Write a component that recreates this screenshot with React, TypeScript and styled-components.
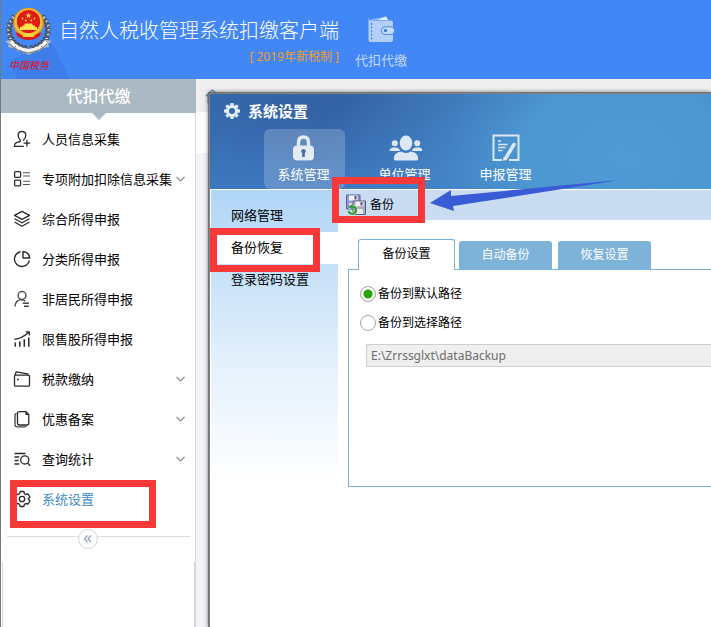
import React, { useState } from "react";
import styled, { createGlobalStyle, css } from "styled-components";

const GlobalStyle = createGlobalStyle`
  *, *::before, *::after { box-sizing: border-box; }
  body {
    margin: 0;
    background: #fff;
    color: #000;
    font-family: "Noto Sans", "Noto Sans CJK SC", sans-serif;
    font-size: 13px;
    line-height: 20px;
  }
  button, input { font: inherit; color: inherit; }
  button { padding: 0; border: 0; background: none; cursor: pointer; }
  svg { display: block; flex: none; }
  ul { list-style: none; margin: 0; padding: 0; }
`;

const Page = styled.div`
  display: flex;
  flex-direction: column;
  min-height: 100vh;
  overflow: hidden;
  border-left: 1px solid #77797d;
`;

/* ---------- application header ---------- */

const Header = styled.header`
  display: flex;
  height: 79px;
  overflow: hidden;
  background: #4287f6;
`;

const Brand = styled.div`
  display: flex;
  flex-direction: column;
  align-items: flex-end;
  padding-top: 16px;
`;

const BrandTitle = styled.h1`
  margin: 0;
  color: #fff;
  font-size: 20px;
  font-weight: 300;
  line-height: 30px;
  white-space: nowrap;
`;

const BrandNote = styled.span`
  color: #f09b26;
  font-size: 12px;
  line-height: 22px;
`;

const HeaderLink = styled.a`
  display: flex;
  flex-direction: column;
  align-items: center;
  gap: 7px;
  margin-left: 16px;
  padding-top: 15px;
  color: #c3dafc;
  text-decoration: none;
  white-space: nowrap;
`;

/* ---------- sidebar ---------- */

const Body = styled.div`
  display: flex;
  flex: 1;
`;

const Sidebar = styled.nav`
  display: flex;
  flex-direction: column;
  flex: none;
  width: 195px;
  background: #fff;
  border-right: 1px solid #d8d9dc;
`;

const SidebarTitle = styled.h2`
  position: relative;
  margin: 0 -1px 6px 0;
  background: #abb9c4;
  color: #fff;
  font-size: 16px;
  font-weight: 500;
  line-height: 34px;
  text-align: center;

  &::after {
    content: "";
    position: absolute;
    top: 100%;
    left: 50%;
    margin-left: -7px;
    border: 7px solid transparent;
    border-top-color: #abb9c4;
    border-bottom: 0;
  }
`;

const MenuEntry = styled.li`
  position: relative;
`;

const MenuButton = styled.button<{ $active?: boolean }>`
  display: flex;
  align-items: center;
  width: 100%;
  height: 40px;
  padding: 0 10px 0 12px;
  color: ${(p) => (p.$active ? "#3c8dc5" : "#000")};
  white-space: nowrap;

  > span {
    flex: 1;
    margin-left: 11px;
    text-align: left;
  }
`;

const CollapseBar = styled.div`
  display: flex;
  margin: 10px 5px 13px 6px;
`;

const CollapseLine = styled.span<{ $short?: boolean }>`
  flex: ${(p) => (p.$short ? "0 0 71px" : "1")};
  height: 8px;
  border-bottom: 1px solid #dcdcdc;
`;

const CollapseButton = styled.button`
  display: grid;
  place-items: center;
  width: 20px;
  height: 20px;
  border: 1px solid #d4d5d8;
  border-radius: 50%;
`;

const SidebarPane = styled.div`
  flex: 1;
  margin-left: 1px;
  margin-right: -1px;
  border: solid #d6d6d6;
  border-width: 0 2px 0 1px;
`;

/* ---------- workspace behind the dialog ---------- */

const Workspace = styled.main`
  display: grid;
  flex: 1;
  min-width: 0;
  background: #f3f4fa;
`;

const Backdrop = styled.div`
  grid-area: 1 / 1;
`;

const Breadcrumb = styled.div`
  display: flex;
  gap: 8px;
  height: 33px;
  padding: 10px 0 0 9px;
  background: #efefef;
  color: #1f7aa6;
  line-height: 20px;
`;

const BlankStrip = styled.div`
  height: 41px;
  background: #fff;
`;

/* ---------- dialog ---------- */

const Dialog = styled.section`
  grid-area: 1 / 1;
  display: flex;
  flex-direction: column;
  z-index: 1;
  min-width: 0;
  margin: 13px 0 0 12px;
  border: solid rgba(100, 102, 104, 0.8);
  border-width: 2px 0 0 2px;
  background: #fff padding-box;
  box-shadow: 0 0 4px rgba(0, 0, 0, 0.5);
`;

const DialogHeader = styled.header`
  height: 95px;
  padding: 7px 0 0 14px;
  color: #fff;
  background:
    radial-gradient(ellipse 300px 230px at 415px 65px, #4f9bd6 0, #4c96d2 35%, rgba(72, 140, 204, 0.6) 60%, rgba(60, 112, 182, 0) 100%),
    radial-gradient(ellipse 260px 80px at 150px 0, #3260a3, rgba(53, 99, 168, 0) 100%),
    linear-gradient(#376bb0, #3d77bd);
`;

const DialogTitle = styled.h2`
  display: flex;
  align-items: center;
  gap: 8px;
  margin: 0 0 8px;
  font-size: 15px;
  font-weight: 700;
  line-height: 20px;
`;

const ModuleTabs = styled.div`
  display: flex;
  gap: 20px;
  padding-left: 40px;
`;

const ModuleTab = styled.button<{ $active?: boolean }>`
  display: flex;
  flex-direction: column;
  align-items: center;
  gap: 2px;
  width: 81px;
  height: 60px;
  padding: 5px 2px 0 0;
  border-radius: 6px;
  color: #fff;
  background: ${(p) => (p.$active ? "rgba(255, 255, 255, 0.2)" : "none")};
`;

const DialogBody = styled.div`
  display: flex;
  flex: 1;
  padding: 1px 0 0 1px;
`;

const SideTabs = styled.ul`
  && {
    flex: none;
    align-self: flex-start;
    width: 127px;
    min-height: 294px;
    padding-top: 10px;
    background: linear-gradient(#b0d6f6, #c7e1f8 28%, #e6f2fc 62%, #fff);
  }
`;

const SideTabEntry = styled.li`
  position: relative;
`;

const SideTab = styled.button<{ $active?: boolean }>`
  display: block;
  width: 100%;
  height: 32px;
  padding: 0 0 2px 20px;
  text-align: left;
  background: ${(p) => (p.$active ? "#fff" : "none")};
`;

const DialogMain = styled.div`
  flex: 1;
  min-width: 0;
`;

const Toolbar = styled.div`
  position: relative;
  height: 30px;
  padding-left: 8px;
  background: #c9dcf2;
`;

const ToolButton = styled.button`
  position: relative;
  display: flex;
  align-items: center;
  gap: 3px;
  height: 30px;
  font-size: 12px;
`;

const TabList = styled.div`
  display: flex;
  align-items: flex-end;
  gap: 6px;
  margin: 19px 0 -1px 20px;
`;

const Tab = styled.button<{ $active?: boolean }>`
  height: 29px;
  width: 93px;
  padding-bottom: 2px;
  border-radius: 3px 3px 0 0;
  background: #7eb3d9;
  color: #fff;
  font-size: 12px;

  ${(p) =>
    p.$active &&
    css`
      position: relative;
      width: 97px;
      height: 31px;
      margin-right: -2px;
      border: 1px solid #78b0d6;
      border-bottom: 0;
      background: #fff;
      color: #000;
    `}
`;

const TabPanel = styled.div`
  display: flex;
  flex-direction: column;
  align-items: flex-start;
  gap: 9px;
  min-height: 218px;
  margin-left: 10px;
  padding: 14px 0 0 11px;
  border: 1px solid #78b0d6;
  border-right: 0;
  font-size: 12px;
`;

const RadioLabel = styled.label`
  display: flex;
  align-items: center;
  gap: 2px;
`;

const Radio = styled.input`
  appearance: none;
  width: 16px;
  height: 16px;
  margin: 0;
  border: 1px solid #a2a2a2;
  border-radius: 50%;
  background: #fff;

  &:checked {
    background: radial-gradient(circle, #22a800 4px, #fff 5px);
  }
`;

const PathField = styled.input`
  align-self: stretch;
  height: 23px;
  margin: 2px 0 0 6px;
  padding: 0 4px;
  border: 1px solid #cfcfcf;
  border-right: 0;
  border-radius: 0;
  background: #efefef;
  color: #6d6d6d;
  font-size: 12px;
  outline: 0;
`;

/* ---------- annotations laid over the interface ---------- */

const Highlight = styled.span<{ $place: "menu" | "side" | "tool" }>`
  position: absolute;
  z-index: 2;
  border: 7px solid #fb3838;
  pointer-events: none;

  ${(p) => p.$place === "menu" && css`top: 1px; left: 9px; width: 146px; height: 48px;`}
  ${(p) => p.$place === "side" && css`top: -4px; left: -1px; width: 110px; height: 44px;`}
  ${(p) => p.$place === "tool" && css`top: -13px; left: -14px; width: 93px; height: 46px;`}
`;

const Arrow = styled.svg`
  position: absolute;
  top: -12px;
  left: 92px;
  z-index: 2;
  pointer-events: none;
`;

/* ---------- drawings ---------- */

const beads = Array.from({ length: 10 }, (_, i) => {
  const a = Math.PI * (0.56 + i * 0.074);
  return { x: Math.cos(a) * 19.5, y: Math.sin(a) * 18.5, r: (a * 180) / Math.PI };
});

const Emblem = () => (
  <svg width="58" height="79" viewBox="1 0 58 79" overflow="visible" role="img" aria-label="中国税务">
    <path d="M52 43 70 79H17L10 60Z" fill="#3d7eea" />
    {[1, -1].map((s) => (
      <g key={s} transform={`translate(28.5 30) scale(${s} 1)`}>
        {beads.map((b, i) => (
          <g key={i} transform={`translate(${b.x} ${b.y}) rotate(${b.r + 25})`}>
            <ellipse rx="3.2" ry="1.9" fill="#4a4f56" />
            <ellipse cx=".6" cy="-.4" rx="1.7" ry=".8" fill="#cfd2d4" />
          </g>
        ))}
      </g>
    ))}
    <circle cx="28.5" cy="23" r="15.3" fill="#dc9a1e" />
    <circle cx="28.5" cy="22.500" r="13.800" fill="#f3c53d" />
    <circle cx="28.5" cy="21.5" r="11.6" fill="#e11a12" />
    <path d="m28.5 12.8.9 2h2.1l-1.7 1.3.7 2.1-2-1.3-2 1.3.7-2.1-1.7-1.3h2.1Z" fill="#ffe14d" />
    <g fill="#ffe14d">
      <circle cx="22.5" cy="18.5" r=".9" />
      <circle cx="25.8" cy="20.5" r=".9" />
      <circle cx="31.2" cy="20.5" r=".9" />
      <circle cx="34.5" cy="18.5" r=".9" />
      <path d="M22 25.5h2l1-2h7l1 2h2v1.5h2V30H20v-3h2Z" />
    </g>
    <path d="M16 32q5 2 7 4h11q2-2 7-4l-1 4q-5 4-11.500 4T17 36Z" fill="#dc1c14" />
    <path d="M24 33.500h9l1.500 3.500h-12Z" fill="#f7cf42" />
    <path d="M5 41 12 40q5 8 16.500 10Q40 48 45 40l7 1-4 3 1 3-6 1-4 3-4 1q-3 1-6.500 3-3.500-2-6.500-3l-4-1-4-3-6-1 1-3Z" fill="#b9bcbd" />
    <path d="M12 40q4 7 16.500 9Q41 47 45 40l2 3q-5 7-18.500 9.500Q15 50 10 43Z" fill="#f2f2f0" />
    <path d="M10 44q6 7 18.500 9M47 44q-6 7-18.500 9M13 49l3-3M44 49l-3-3M20 51l2 1M37 51l-2 1" stroke="#71757a" fill="none" strokeWidth=".9" />
    <text x="9" y="69" fontSize="10" fontWeight="500" fontStyle="italic" fill="#cf2030" fontFamily='"Noto Sans CJK SC", sans-serif'>
      中国税务
    </text>
  </svg>
);

const WalletIcon = () => (
  <svg width="28" height="28" viewBox="0 0 28 28">
    <path d="M3 4.500 19.500 1.500l2 3.500H3Z" fill="#8fb8f6" />
    <path d="m11 5 7.500-3.500L21 5Z" fill="#e3eefe" />
    <path d="M1.500 2.500Q1.500 5 4 5.500h20q2 0 2 2V25q0 2-2 2H3.500q-2 0-2-2Z" fill="#b4d0fa" />
    <path d="M4.500 8v17" stroke="#4a82d8" strokeWidth="1.300" strokeDasharray="2 1.600" />
    <rect x="14.500" y="11.800" width="13" height="7.600" rx="3.500" fill="#c7ddfc" stroke="#4f88dc" strokeWidth="1" />
    <circle cx="18.500" cy="15.600" r="1.700" fill="#3f78cf" />
  </svg>
);

const LineIcon = ({ children }: { children: React.ReactNode }) => (
  <svg width="18" height="18" viewBox="0 0 18 18" fill="none" stroke="#2b2b2b" strokeWidth="1.300" strokeLinejoin="round">
    {children}
  </svg>
);

const icons = {
  person: (
    <LineIcon>
      <path d="M11.200 10.500 10.500 10q2.300-2 2.300-4.800Q12.800 1.500 9 1.500T5.200 5.200Q5.200 8 7.300 10v1.300L3 12.800q-1.600.7-1.600 3.600h9.400M13.900 9.800v6.600M10.600 13.100h6.600" />
    </LineIcon>
  ),
  list: (
    <LineIcon>
      <rect x="1.600" y="1.700" width="6" height="5.600" rx="1" />
      <rect x="1.600" y="10.200" width="6" height="5.600" rx="1" />
      <path d="M10 2.700h7M10 6h7M10 11.200h7M10 14.500h7" strokeWidth="1.100" stroke="#555" />
    </LineIcon>
  ),
  layers: (
    <LineIcon>
      <path d="m9 1.400 7.500 4L9 9.400l-7.500-4Z" />
      <path d="M1.500 8.800 9 12.800l7.500-4M1.500 12 9 16.200 16.500 12" />
    </LineIcon>
  ),
  pie: (
    <LineIcon>
      <path d="M7.500 1.700A7.500 7.500 0 1 0 16.300 10.500M10 1.500V8h6.700Q16.300 2.500 10 1.500Z" strokeWidth="1.400" />
    </LineIcon>
  ),
  resident: (
    <LineIcon>
      <circle cx="9" cy="5.500" r="3.900" stroke="#555" strokeWidth="1.500" />
      <path d="M2 16.500Q2.500 10 8 9.600q2.800 0 4.200 1.600M9.800 13.300h6M11 16.200h4.800" stroke="#444" strokeWidth="1.400" />
    </LineIcon>
  ),
  chart: (
    <LineIcon>
      <path d="M2.300 16.800v-4.300M6.800 16.800v-5.300M11.300 16.800V9.300M15.800 16.800V7.500" strokeWidth="1.500" />
      <path d="M1.300 9.300Q9 8.500 15.800 2.200M12.600 1.900h3.700v3.600" />
    </LineIcon>
  ),
  purse: (
    <LineIcon>
      <rect x="1.500" y="5.200" width="15" height="11" rx="1" />
      <path d="m2 5 1.300-3.200 11.500 2v1.400" />
      <path d="M4 9.500h1.800" />
    </LineIcon>
  ),
  pages: (
    <LineIcon>
      <path d="M13 1.600H6.500q-2 0-2 2V13q0 2 2 2h7.300q2 0 2-2V4.400ZM13 1.600v2.800h2.800" />
      <path d="M3.500 3.500Q2 3.800 2 5.500v9q0 2.300 2.300 2.300h7.200q1.700 0 2-1.500" stroke="#444" />
    </LineIcon>
  ),
  query: (
    <LineIcon>
      <path d="M1.500 3.500h11M1.500 7h4.700M1.500 10.500h4M1.500 14h4.700" />
      <circle cx="11.800" cy="9.900" r="4.100" />
      <path d="m14.600 13 2.700 2.800" />
    </LineIcon>
  ),
  gear: (
    <LineIcon>
      <path d="M7.200 1.500h3.600l.7 2.300 1.300.7 2.300-.5 1.800 3.100L15.300 9l1.600 1.900-1.800 3.100-2.300-.5-1.300.7-.7 2.300H7.200l-.7-2.300-1.300-.7-2.300.5-1.800-3.100L2.700 9 1.100 7.100 2.900 4l2.300.5 1.300-.7Z" />
      <circle cx="9" cy="9" r="2.700" />
    </LineIcon>
  ),
};

const Chevron = () => (
  <svg width="9" height="9" viewBox="0 0 9 9" fill="none" stroke="#8d8d8d" strokeWidth="1.200">
    <path d="m.5 2 4 4 4-4" />
  </svg>
);

const DoubleChevron = () => (
  <svg width="10" height="10" viewBox="0 0 10 10" fill="none" stroke="#8f9abb" strokeWidth="1.200">
    <path d="M4.500 1.500 1.500 4.700l3 3.300M8 1.500 5 4.700 8 8" />
  </svg>
);

const HomeIcon = () => (
  <svg width="15" height="15" viewBox="0 0 15 15" fill="none" stroke="#5f93ad" strokeWidth="1.200">
    <path d="M.8 7 7.500 1l6.700 6M3 6v8h9V6" />
  </svg>
);

const SolidGear = () => (
  <svg width="16" height="16" viewBox="0 0 16 16">
    <g fill="#e3ecf7">
      {[0, 45, 90, 135].map((r) => (
        <rect key={r} x="6.300" y="0" width="3.400" height="16" rx=".8" transform={`rotate(${r} 8 8)`} />
      ))}
      <circle cx="8" cy="8" r="6" />
    </g>
    <circle cx="8" cy="8" r="3" fill="#3768ac" />
  </svg>
);

const LockIcon = () => (
  <svg width="26" height="28" viewBox="0 0 26 28">
    <path d="M7.500 14V8.500Q7.500 3 12.500 3t5 5.500V14" fill="none" stroke="#e3ebf5" strokeWidth="3.400" />
    <rect x="2.500" y="12.500" width="21" height="14.500" rx="4" fill="#4a6fa4" opacity=".5" />
    <rect x="2" y="11.500" width="21" height="15" rx="4" fill="#e3ebf5" />
    <path d="M12.500 15a2.300 2.300 0 0 1 1.300 4.200V23h-2.600v-3.800A2.300 2.300 0 0 1 12.500 15Z" fill="#4a6ea3" />
  </svg>
);

const PeopleIcon = () => (
  <svg width="34" height="28" viewBox="-1 0 34 28" fill="#dce8f5">
    <circle cx="5.800" cy="9.200" r="3" />
    <circle cx="28.200" cy="9.200" r="3" />
    <path d="M.5 17q0-3.500 4-3.500h2q4 0 4.500 3.500ZM23 17q.5-3.500 4.500-3.500h2q4 0 4 3.500Z" />
    <ellipse cx="17" cy="9" rx="6.300" ry="7.500" />
    <path d="M4.800 25q0-7 7.700-7.500 4.500 3 9 0 7.700.5 7.700 7.500 0 1.500-2 1.500H6.800q-2 0-2-1.500Z" />
  </svg>
);

const FormIcon = () => (
  <svg width="28" height="28" viewBox="0 0 28 28" fill="none" stroke="#dce8f5">
    <path d="M10 26H1.500V1.500h25V26H17" strokeWidth="2" />
    <path d="M6 7h3M6 10.500h9.500M6 13.500h7.500M6 16.500h4.500" strokeWidth="1.500" />
    <path d="m22 10.500-8.500 14" strokeWidth="3.500" strokeLinecap="round" />
    <path d="m11 27 .5-4 3.500 2.200Z" fill="#dce8f5" stroke="none" />
  </svg>
);

const BackupIcon = () => (
  <svg width="21" height="22" viewBox="0 0 21 22">
    <path d="M.5 1h13.500v14H.5Z" fill="#979ad4" stroke="#5a5fac" />
    <path d="M3 1.500h8.500v5H3Z" fill="#f2f2f7" />
    <path d="M8.500 2h2v3.500h-2Z" fill="#56596c" />
    <path d="M3 9h8v6H3Z" fill="#dfe0ea" />
    <path d="M7 7h12.500v13.500H7Z" fill="#a8aac2" stroke="#5c5e80" />
    <path d="M9.500 7.500h8v4.800h-8Z" fill="#efeff4" />
    <path d="M14.500 8h2v3.500h-2Z" fill="#5b5d70" />
    <path d="M10 15h7v5h-7Z" fill="#e6e6ec" />
    <path d="M2.500 17Q3.500 20 6.500 19.800 10 19.300 10 16q-.3-3.200-4-3.500" fill="none" stroke="#dff0df" strokeWidth="3.400" />
    <path d="M2.500 17Q3.500 20 6.500 19.800 10 19.300 10 16q-.3-3.200-4-3.500" fill="none" stroke="#3b9a3b" strokeWidth="2.300" />
    <path d="M1.800 13 6.800 9.800v6Z" fill="#3b9a3b" />
  </svg>
);

/* ---------- content ---------- */

type IconName = keyof typeof icons;

const menu: { label: string; icon: IconName; expandable?: boolean }[] = [
  { label: "人员信息采集", icon: "person" },
  { label: "专项附加扣除信息采集", icon: "list", expandable: true },
  { label: "综合所得申报", icon: "layers" },
  { label: "分类所得申报", icon: "pie" },
  { label: "非居民所得申报", icon: "resident" },
  { label: "限售股所得申报", icon: "chart" },
  { label: "税款缴纳", icon: "purse", expandable: true },
  { label: "优惠备案", icon: "pages", expandable: true },
  { label: "查询统计", icon: "query", expandable: true },
  { label: "系统设置", icon: "gear" },
];

const modules = [
  { label: "系统管理", icon: <LockIcon /> },
  { label: "单位管理", icon: <PeopleIcon /> },
  { label: "申报管理", icon: <FormIcon /> },
];

const sideTabs = ["网络管理", "备份恢复", "登录密码设置"];
const tabs = ["备份设置", "自动备份", "恢复设置"];
const targets = ["备份到默认路径", "备份到选择路径"];

export default function App() {
  const [page, setPage] = useState("系统设置");
  const [module, setModule] = useState("系统管理");
  const [section, setSection] = useState("备份恢复");
  const [tab, setTab] = useState("备份设置");
  const [target, setTarget] = useState(targets[0]);

  return (
    <>
      <GlobalStyle />
      <Page>
        <Header>
          <Emblem />
          <Brand>
            <BrandTitle>自然人税收管理系统扣缴客户端</BrandTitle>
            <BrandNote>[ 2019年新税制 ]</BrandNote>
          </Brand>
          <HeaderLink href="#withholding">
            <WalletIcon />
            代扣代缴
          </HeaderLink>
        </Header>

        <Body>
          <Sidebar>
            <SidebarTitle>代扣代缴</SidebarTitle>
            <ul>
              {menu.map((m) => (
                <MenuEntry key={m.label}>
                  <MenuButton $active={page === m.label} onClick={() => setPage(m.label)}>
                    {icons[m.icon]}
                    <span>{m.label}</span>
                    {m.expandable && <Chevron />}
                  </MenuButton>
                  {m.label === "系统设置" && <Highlight $place="menu" />}
                </MenuEntry>
              ))}
            </ul>
            <CollapseBar>
              <CollapseLine $short />
              <CollapseButton aria-label="收起">
                <DoubleChevron />
              </CollapseButton>
              <CollapseLine />
            </CollapseBar>
            <SidebarPane />
          </Sidebar>

          <Workspace>
            <Backdrop>
              <Breadcrumb>
                <HomeIcon />
                首页
              </Breadcrumb>
              <BlankStrip />
            </Backdrop>

            <Dialog role="dialog" aria-labelledby="dialog-title">
              <DialogHeader>
                <DialogTitle id="dialog-title">
                  <SolidGear />
                  系统设置
                </DialogTitle>
                <ModuleTabs>
                  {modules.map((m) => (
                    <ModuleTab key={m.label} $active={module === m.label} onClick={() => setModule(m.label)}>
                      {m.icon}
                      {m.label}
                    </ModuleTab>
                  ))}
                </ModuleTabs>
              </DialogHeader>

              <DialogBody>
                <SideTabs>
                  {sideTabs.map((s) => (
                    <SideTabEntry key={s}>
                      <SideTab $active={section === s} onClick={() => setSection(s)}>
                        {s}
                      </SideTab>
                      {s === "备份恢复" && <Highlight $place="side" />}
                    </SideTabEntry>
                  ))}
                </SideTabs>

                <DialogMain>
                  <Toolbar>
                    <ToolButton>
                      <BackupIcon />
                      备份
                      <Highlight $place="tool" />
                    </ToolButton>
                    <Arrow width="192" height="36" viewBox="0 0 192 36" aria-hidden="true">
                      <path d="M0 25 21 12v6L190 2 23 28l1 5Z" fill="#3a5bd6" />
                    </Arrow>
                  </Toolbar>

                  <TabList role="tablist">
                    {tabs.map((t) => (
                      <Tab key={t} role="tab" aria-selected={tab === t} $active={tab === t} onClick={() => setTab(t)}>
                        {t}
                      </Tab>
                    ))}
                  </TabList>
                  <TabPanel role="tabpanel">
                    {targets.map((t) => (
                      <RadioLabel key={t}>
                        <Radio type="radio" name="target" checked={target === t} onChange={() => setTarget(t)} />
                        {t}
                      </RadioLabel>
                    ))}
                    <PathField aria-label="备份路径" readOnly value="E:\Zrrssglxt\dataBackup" />
                  </TabPanel>
                </DialogMain>
              </DialogBody>
            </Dialog>
          </Workspace>
        </Body>
      </Page>
    </>
  );
}
